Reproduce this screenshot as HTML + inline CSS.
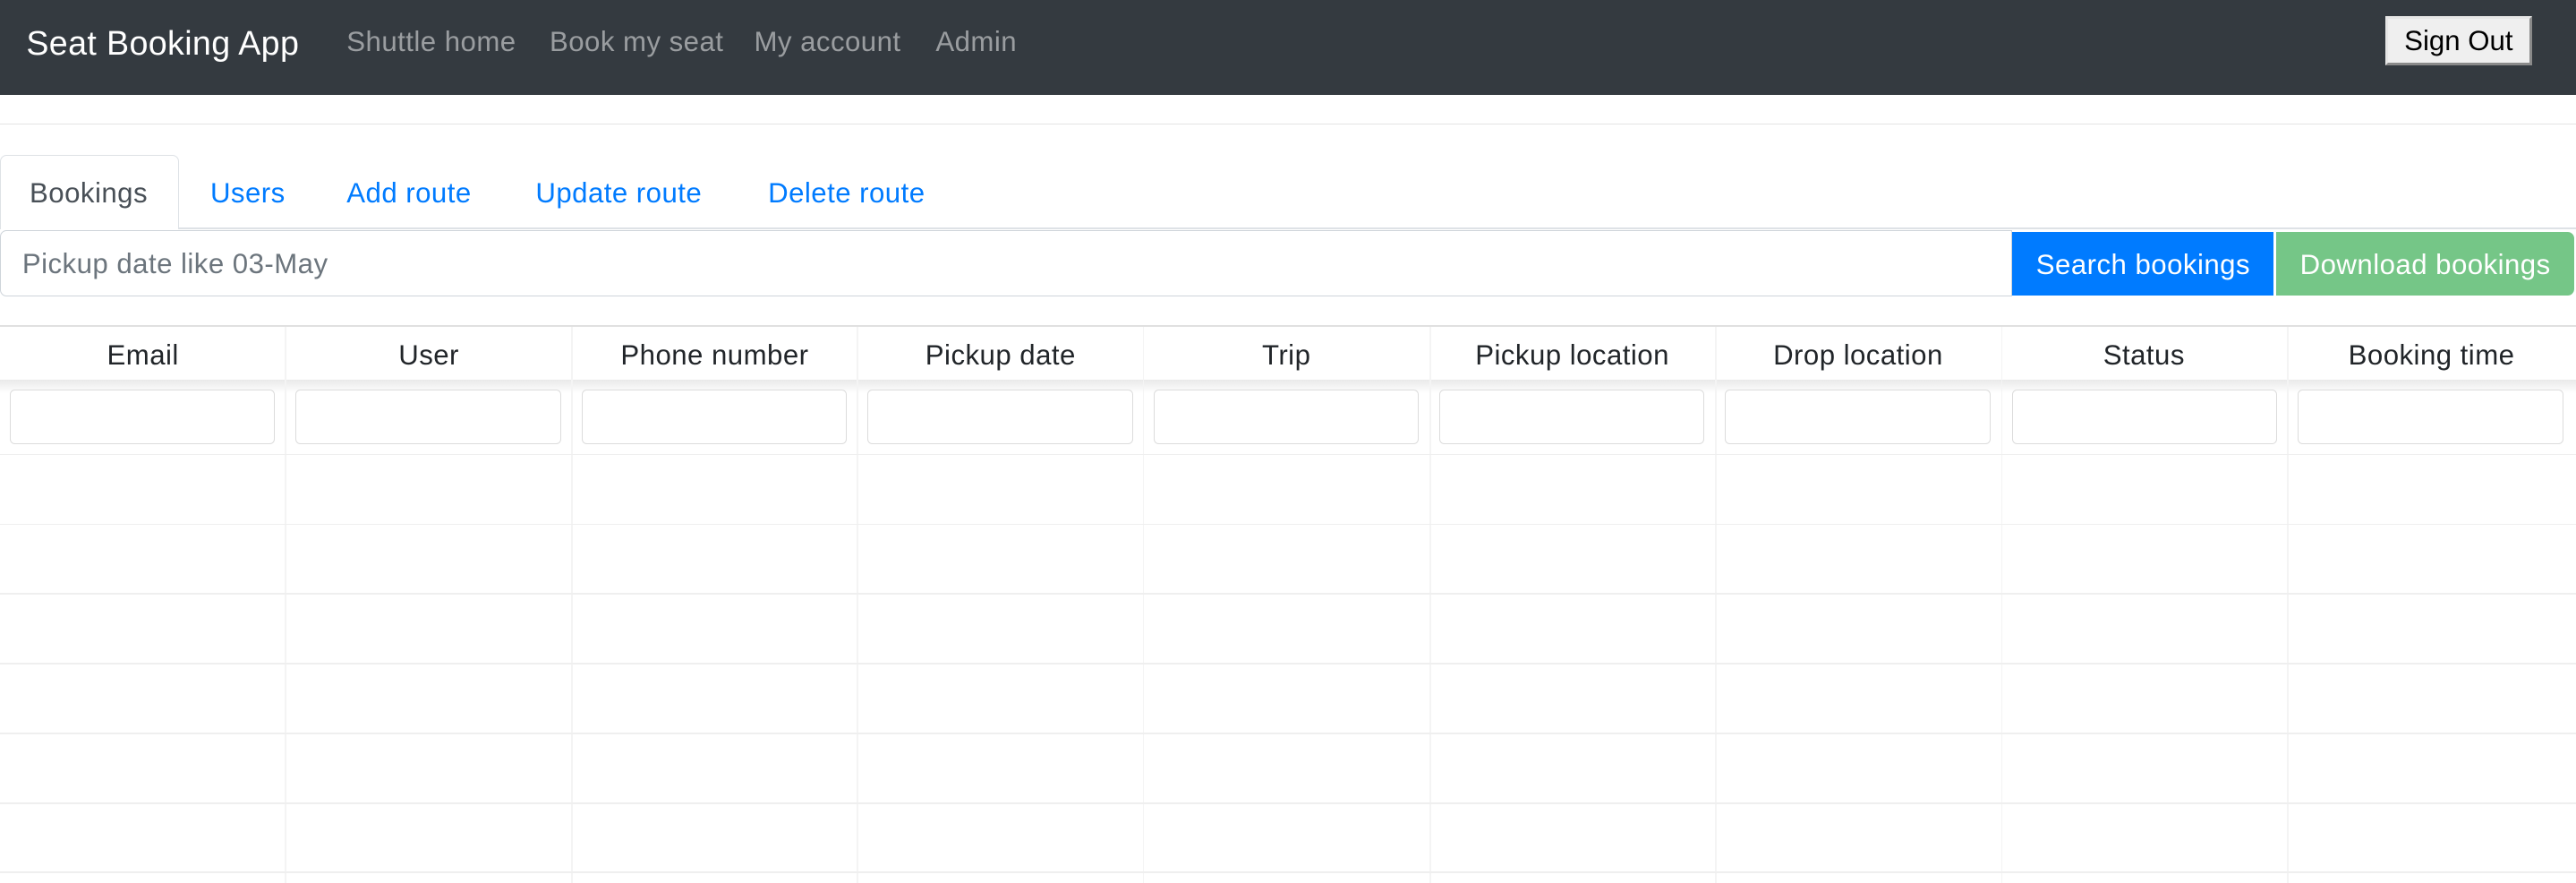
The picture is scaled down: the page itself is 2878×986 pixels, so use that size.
<!DOCTYPE html>
<html><head><meta charset="utf-8"><style>
*{box-sizing:border-box;margin:0;padding:0}
html,body{width:2878px;height:986px;overflow:hidden;background:#fff}
#w{zoom:1.8355;width:1568px;height:537px;position:relative;font-family:"Liberation Sans",Arial,sans-serif;color:#212529;font-size:17px;letter-spacing:0.25px}
.a{position:absolute;white-space:nowrap}
.nav{left:0;top:0;width:1568px;height:57.5px;background:#343a40}
.brand{left:16px;top:14px;font-size:20.5px;color:#fff;line-height:24px;letter-spacing:0.2px}
.nl{top:16px;color:rgba(255,255,255,.5);line-height:20px}
.so{left:1452px;top:10px;width:89px;height:30px;background:#efefef;border:2px solid;border-color:#e6e6e6 #8a8a8a #8a8a8a #e6e6e6;color:#000;text-align:center;line-height:27px;letter-spacing:0}
.hr{left:0;top:75px;width:1568px;height:1px;background:#e3e3e3}
.tabline{left:0;top:138.5px;width:1568px;height:1px;background:#dee2e6}
.tab{left:0;top:94px;width:109px;height:45.5px;border:1px solid #dee2e6;border-bottom:none;border-radius:4px 4px 0 0;background:#fff}
.tt{top:108px;line-height:20px;color:#007bff}
.inp{left:0;top:140px;width:1225px;height:40.5px;border:1px solid #ced4da;border-radius:4px 0 0 4px;color:#6c757d;padding-left:13px;line-height:40px}
.bs{left:1225px;top:141px;width:159px;height:39px;background:#007bff;color:#fff;text-align:center;line-height:40px}
.bd{left:1385.5px;top:141px;width:181.5px;height:39px;background:#75c687;color:#fff;text-align:center;line-height:40px;border-radius:0 4px 4px 0}
.th{top:198px;left:0;width:1568px;height:1px;background:#e0e0e0}
.hdr{top:199px;height:32px;line-height:35px;text-align:center}
.shadow{left:0;top:231px;width:1568px;height:8px;background:linear-gradient(#e9e9e9,rgba(255,255,255,0))}
.fi{top:237px;height:33px;border:1px solid #dcdcdc;border-radius:3px;background:#fff}
.vl{width:1px;top:199px;height:338px;background:#f4f4f4}
.rl{left:0;width:1568px;height:1px;background:#efefef}
</style></head><body><div id="w">
<div class="a nav"></div>
<div class="a brand">Seat Booking App</div>
<div class="a nl" style="left:211px">Shuttle home</div>
<div class="a nl" style="left:334.5px">Book my seat</div>
<div class="a nl" style="left:459px">My account</div>
<div class="a nl" style="left:569.5px">Admin</div>
<div class="a so">Sign Out</div>
<div class="a hr"></div>
<div class="a tabline"></div>
<div class="a tab"></div>
<div class="a tt" style="left:18px;color:#495057">Bookings</div>
<div class="a tt" style="left:128px">Users</div>
<div class="a tt" style="left:211px">Add route</div>
<div class="a tt" style="left:326px">Update route</div>
<div class="a tt" style="left:467.5px">Delete route</div>
<div class="a inp">Pickup date like 03-May</div>
<div class="a bs">Search bookings</div>
<div class="a bd">Download bookings</div>
<div class="a th"></div>
<div class="a shadow"></div>
<div class="a vl" style="left:173.5px"></div><div class="a vl" style="left:347.5px"></div><div class="a vl" style="left:521.5px"></div><div class="a vl" style="left:695.5px"></div><div class="a vl" style="left:870px"></div><div class="a vl" style="left:1044px"></div><div class="a vl" style="left:1218px"></div><div class="a vl" style="left:1392px"></div>
<div class="a hdr" style="left:0;width:174px">Email</div>
<div class="a hdr" style="left:174px;width:174px">User</div>
<div class="a hdr" style="left:348px;width:174px">Phone number</div>
<div class="a hdr" style="left:522px;width:174px">Pickup date</div>
<div class="a hdr" style="left:696px;width:174px">Trip</div>
<div class="a hdr" style="left:870px;width:174px">Pickup location</div>
<div class="a hdr" style="left:1044px;width:174px">Drop location</div>
<div class="a hdr" style="left:1218px;width:174px">Status</div>
<div class="a hdr" style="left:1392px;width:176px">Booking time</div>
<div class="a fi" style="left:6px;width:161.5px"></div>
<div class="a fi" style="left:180px;width:161.5px"></div>
<div class="a fi" style="left:354px;width:161.5px"></div>
<div class="a fi" style="left:528px;width:161.5px"></div>
<div class="a fi" style="left:702px;width:161.5px"></div>
<div class="a fi" style="left:876px;width:161.5px"></div>
<div class="a fi" style="left:1050px;width:161.5px"></div>
<div class="a fi" style="left:1224.5px;width:161.5px"></div>
<div class="a fi" style="left:1398.5px;width:162px"></div>
<div class="a rl" style="top:276px"></div>
<div class="a rl" style="top:318.5px"></div>
<div class="a rl" style="top:360.5px"></div>
<div class="a rl" style="top:403px"></div>
<div class="a rl" style="top:445.5px"></div>
<div class="a rl" style="top:488px"></div>
<div class="a rl" style="top:530px"></div>
</div></body></html>
